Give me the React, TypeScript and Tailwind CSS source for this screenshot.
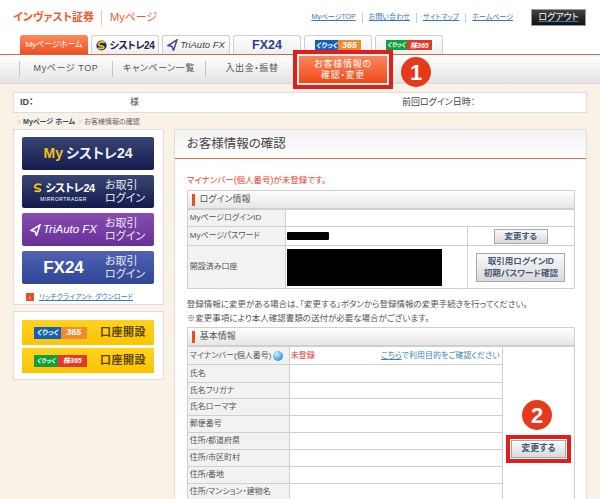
const jp = "font-['Liberation_Sans','Noto_Sans_CJK_JP',sans-serif] [font-feature-settings:'palt']";

function Tab({ className = "", children }: { className?: string; children: React.ReactNode }) {
  return (
    <div
      className={`flex h-[19px] w-[68px] items-center justify-center rounded-t-[3px] border border-b-0 border-[#cfcfcf] bg-gradient-to-b from-white to-[#efefef] ${className}`}
    >
      {children}
    </div>
  );
}

function ClickLogo({ kabu = false, wide = false }: { kabu?: boolean; wide?: boolean }) {
  const size = wide ? "h-[12px] w-[53px]" : "h-[10px] w-[46px]";
  if (kabu) {
    return (
      <div className={`flex shrink-0 items-center overflow-hidden whitespace-nowrap font-bold italic leading-none text-white ${size}`}>
        <span className="flex h-full w-[45%] items-center justify-center bg-[#12a03c] text-[6px]">くりっく</span>
        <span className="flex h-full flex-1 items-center justify-center bg-[#e03a2a] text-[7px]">株365</span>
      </div>
    );
  }
  return (
    <div className={`flex shrink-0 items-center overflow-hidden whitespace-nowrap font-bold italic leading-none text-white ${size}`}>
      <span className="flex h-full w-[50%] items-center justify-center bg-[#1460b8] text-[7px]">くりっく</span>
      <span className="flex h-full flex-1 items-center justify-center bg-[#f08a30] text-[9px]">365</span>
    </div>
  );
}

function SwirlS({ size = 14 }: { size?: number }) {
  return (
    <svg width={size} height={size} viewBox="0 0 14 14" className="shrink-0">
      <circle cx="7" cy="7" r="6.5" fill="#1e2a5c" />
      <path d="M11 3.5C8 1.5 3.5 2.5 3 5.5c-.4 2.5 6.5 1.5 7 3.5.3 1.8-4 2.5-7 1" fill="none" stroke="#f3c31c" strokeWidth="2.2" />
    </svg>
  );
}

function TriMark({ color = "#5b3d9e" }: { color?: string }) {
  return (
    <svg width="11" height="12" viewBox="0 0 11 12" className="shrink-0">
      <path d="M10 .8 1 6.5l4 .9L6.5 11.5Z" fill="none" stroke={color} strokeWidth="1.5" />
    </svg>
  );
}

function NavItem({ label, w }: { label: string; w: string }) {
  return (
    <div className={`flex h-[16px] items-center justify-center border-l border-[#c4c4c4] text-[9px] tracking-[0.6px] text-[#555] ${w}`}>
      {label}
    </div>
  );
}

function TradeButton({ bg, left }: { bg: string; left: React.ReactNode }) {
  return (
    <div className={`flex h-[33px] w-[132px] items-center rounded-[2px] ${bg}`}>
      <div className="flex w-[83px] flex-col items-center justify-center">{left}</div>
      <div className="flex flex-col text-[11px] leading-[13px] text-[#e8e8f0]">
        <span>お取引</span>
        <span>ログイン</span>
      </div>
    </div>
  );
}

function OpenAccount({ kabu = false }: { kabu?: boolean }) {
  return (
    <div className="flex h-[25px] w-[132px] items-center rounded-[1px] bg-gradient-to-b from-[#ffd21e] to-[#fcc400] pl-[12px]">
      <ClickLogo kabu={kabu} wide />
      <span className="ml-[13px] whitespace-nowrap text-[11px] font-bold tracking-[0.5px] text-[#5a4300]">口座開設</span>
    </div>
  );
}

function SectionHead({ title }: { title: string }) {
  return (
    <div className="flex h-[19px] items-center border border-[#cfcfcf] bg-gradient-to-b from-white to-[#e6e6e6] pl-[4px]">
      <span className="h-[12px] w-[3px] bg-[#f04c1c]" />
      <span className="ml-[5px] text-[9px] text-[#555]">{title}</span>
    </div>
  );
}

function GrayButton({ className = "", children }: { className?: string; children: React.ReactNode }) {
  return (
    <div
      className={`flex items-center justify-center border border-[#a9a9a9] bg-gradient-to-b from-[#fafafa] to-[#d9d9d9] text-[8.5px] font-bold text-[#3f5a74] ${className}`}
    >
      {children}
    </div>
  );
}

const th = "border border-[#cfcfcf] bg-[#f2f2f2] pl-[2px] text-left text-[8px] font-normal whitespace-nowrap text-[#555]";
const td = "border border-[#cfcfcf] bg-white";

const basicRows: [string, string][] = [
  ["氏名", "h-[18px]"],
  ["氏名フリガナ", "h-[16px]"],
  ["氏名ローマ字", "h-[17px]"],
  ["郵便番号", "h-[17px]"],
  ["住所/都道府県", "h-[17px]"],
  ["住所/市区町村", "h-[17px]"],
  ["住所/番地", "h-[17px]"],
  ["住所/マンション・建物名", "h-[17px]"],
];

export default function App() {
  return (
    <div className={`relative h-[499px] w-[600px] overflow-hidden bg-[#fbf2e7] ${jp}`}>
      {/* header */}
      <div className="bg-white">
        <div className="flex h-[35px] items-center pl-[13px] pr-[14px]">
          <span className="text-[11px] font-bold text-[#ee5a32]">インヴァスト証券</span>
          <span className="ml-[7px] h-[15px] w-px bg-[#e8c8b8]" />
          <span className="ml-[8px] text-[11px] text-[#ee5a32]">Myページ</span>
          <div className="ml-auto flex items-center text-[7px] text-[#3a78b8] underline">
            <span>MyページTOP</span>
            <span className="ml-[6px] h-[10px] w-px bg-[#ccc]" />
            <span className="ml-[6px]">お問い合わせ</span>
            <span className="ml-[6px] h-[10px] w-px bg-[#ccc]" />
            <span className="ml-[6px]">サイトマップ</span>
            <span className="ml-[6px] h-[10px] w-px bg-[#ccc]" />
            <span className="ml-[6px]">ホームページ</span>
            <div className="ml-[18px] flex h-[17px] w-[55px] items-center justify-center border border-[#999] bg-gradient-to-b from-[#444] to-[#111] text-[9px] text-white no-underline">
              ログアウト
            </div>
          </div>
        </div>
        <div className="flex h-[19px] items-end gap-[3px] pl-[20px]">
          <div className="flex h-[19px] w-[68px] items-center justify-center rounded-t-[3px] bg-gradient-to-b from-[#f98a5a] to-[#ee4d1c] text-[8px] text-white">
            Myページホーム
          </div>
          <Tab>
            <SwirlS size={11} />
            <span className="ml-[3px] text-[10px] font-bold tracking-[-0.5px] text-[#1a2350]">シストレ24</span>
          </Tab>
          <Tab>
            <TriMark />
            <span className="ml-[2px] whitespace-nowrap text-[9.5px] italic text-[#444]">TriAuto FX</span>
          </Tab>
          <Tab>
            <span className="text-[12.5px] font-bold text-[#28418f]">FX24</span>
          </Tab>
          <Tab>
            <ClickLogo />
          </Tab>
          <Tab>
            <ClickLogo kabu />
          </Tab>
        </div>
        <div className="h-px bg-[#e8603c]" />
      </div>

      {/* nav */}
      <div className="flex h-[29px] items-center border-b border-[#d8d8d8] bg-gradient-to-b from-white to-[#e3e3e3] pl-[19px]">
        <NavItem label="Myページ TOP" w="w-[93px]" />
        <NavItem label="キャンペーン一覧" w="w-[93px]" />
        <NavItem label="入出金・振替" w="w-[93px]" />
      </div>

      <div className="px-[13px] pt-[8px]">
        {/* id bar */}
        <div className="flex h-[21px] items-center border border-[#ddd] bg-white pl-[6px] text-[9px] text-[#444]">
          <span className="w-[110px] font-bold">ID：</span>
          <span className="w-[272px]">様</span>
          <span>前回ログイン日時：</span>
        </div>

        {/* breadcrumb */}
        <div className="flex h-[16px] items-center pl-[4px] pt-[2px] text-[7px] text-[#666]">
          <span className="text-[#ccc]">&gt;</span>
          <span className="ml-[2px] font-bold text-[#2c4a63]">Myページ ホーム</span>
          <span className="ml-[3px] text-[#ccc]">&gt;</span>
          <span className="ml-[2px]">お客様情報の確認</span>
        </div>

        <div className="flex items-start gap-[10px]">
          {/* sidebar */}
          <div className="flex w-[151px] flex-col gap-[6px]">
            <div className="flex h-[176px] flex-col gap-[5px] border border-[#ddd] bg-white pl-[8px] pt-[7px]">
              <div className="flex h-[33px] w-[132px] items-center justify-center rounded-[2px] bg-gradient-to-b from-[#3a4672] to-[#141b4d] text-[14px] font-bold">
                <span className="text-[#f0c020]">My</span>
                <span className="ml-[3px] text-[#eeeef4]">シストレ24</span>
              </div>
              <TradeButton
                bg="bg-gradient-to-b from-[#3a4672] to-[#141b4d]"
                left={
                  <>
                    <div className="flex items-center">
                      <SwirlS size={12} />
                      <span className="ml-[1px] text-[11px] font-bold tracking-[-0.5px] text-white">シストレ24</span>
                    </div>
                    <span className="text-[5px] leading-[7px] tracking-[0.5px] text-white">MIRRORTRADER</span>
                  </>
                }
              />
              <TradeButton
                bg="bg-gradient-to-b from-[#8a4cb0] to-[#67309a]"
                left={
                  <div className="flex items-center">
                    <TriMark color="#ffffff" />
                    <span className="ml-[2px] whitespace-nowrap text-[11.5px] italic text-white">TriAuto FX</span>
                  </div>
                }
              />
              <TradeButton
                bg="bg-gradient-to-b from-[#5062b0] to-[#2f4596]"
                left={<span className="text-[17px] font-bold text-white">FX24</span>}
              />
              <div className="flex items-center pl-[4px] pt-[3px]">
                <span className="flex h-[8px] w-[8px] items-center justify-center bg-[#e8502a] text-[6px] leading-none text-white">
                  ›
                </span>
                <span className="ml-[5px] whitespace-nowrap text-[7px] text-[#3a78b8] underline">リッチクライアント ダウンロード</span>
              </div>
            </div>
            <div className="flex h-[69px] flex-col gap-[3px] border border-[#ddd] bg-white pl-[8px] pt-[8px]">
              <OpenAccount />
              <OpenAccount kabu />
            </div>
          </div>

          {/* main */}
          <div className="w-[414px] border border-[#ddd] bg-white">
            <div className="flex h-[29px] items-center border-b-[1px] border-[#ee6a44] bg-gradient-to-b from-[#f1f1f1] to-white pl-[12px] text-[12.5px] text-[#444]">
              お客様情報の確認
            </div>
            <div className="pl-[12px] pr-[11px] pt-[15px]">
              <p className="h-[16px] text-[8.5px] leading-[12px] text-[#e8402a]">マイナンバー(個人番号)が未登録です。</p>

              <SectionHead title="ログイン情報" />
              <table className="w-full table-fixed border-collapse">
                <colgroup>
                  <col className="w-[98px]" />
                  <col className="w-[182px]" />
                  <col />
                </colgroup>
                <tbody>
                  <tr className="h-[17px]">
                    <th className={th}>MyページログインID</th>
                    <td className={td} colSpan={2} />
                  </tr>
                  <tr className="h-[19px]">
                    <th className={th}>Myページパスワード</th>
                    <td className={`${td} pl-[1px]`}>
                      <div className="h-[8px] w-[42px] rounded-[1px] bg-black" />
                    </td>
                    <td className={td}>
                      <GrayButton className="mx-auto h-[15px] w-[54px]">変更する</GrayButton>
                    </td>
                  </tr>
                  <tr className="h-[43px]">
                    <th className={th}>開設済み口座</th>
                    <td className={`${td} pl-[1px]`}>
                      <div className="h-[37px] w-[155px] bg-black" />
                    </td>
                    <td className={td}>
                      <GrayButton className="mx-auto h-[29px] w-[89px] text-center leading-[12px]">
                        取引用ログインID
                        <br />
                        初期パスワード確認
                      </GrayButton>
                    </td>
                  </tr>
                </tbody>
              </table>

              <div className="whitespace-nowrap pt-[8px] text-[8.5px] leading-[14px] text-[#555]">
                <p>登録情報に変更がある場合は、「変更する」ボタンから登録情報の変更手続きを行ってください。</p>
                <p>※変更事項により本人確認書類の送付が必要な場合がございます。</p>
              </div>

              <div className="mt-[2px]">
                <SectionHead title="基本情報" />
              </div>
              <table className="w-full table-fixed border-collapse">
                <colgroup>
                  <col className="w-[102px]" />
                  <col className="w-[213px]" />
                  <col />
                </colgroup>
                <tbody>
                  <tr className="h-[18px]">
                    <th className={th}>
                      <div className="flex items-center">
                        マイナンバー(個人番号)
                        <span className="ml-[2px] h-[10px] w-[10px] rounded-full bg-[radial-gradient(circle_at_35%_30%,#cfeefa,#3a9bd8_70%)]" />
                      </div>
                    </th>
                    <td className={td}>
                      <div className="flex items-center justify-between whitespace-nowrap pl-[1px] pr-[2px] text-[8px]">
                        <span className="text-[#e8302a]">未登録</span>
                        <span className="text-[#3a86b8]">
                          <span className="underline">こちら</span>で利用目的をご確認ください
                        </span>
                      </div>
                    </td>
                    <td className={td} rowSpan={9} />
                  </tr>
                  {basicRows.map(([label, h]) => (
                    <tr key={label} className={h}>
                      <th className={th}>{label}</th>
                      <td className={td} />
                    </tr>
                  ))}
                </tbody>
              </table>
            </div>
          </div>
        </div>
      </div>

      {/* callouts laid over the page */}
      <div className="absolute left-[293px] top-[50px] h-[39px] w-[100px] border-4 border-[#e01f1a] bg-[#efefef] p-[2px]">
        <div className="flex h-full w-full items-center justify-center bg-gradient-to-b from-[#f9855a] to-[#f0480f] text-center text-[9px] leading-[11px] tracking-[0.7px] text-white">
          お客様情報の
          <br />
          確認・変更
        </div>
      </div>
      <div className="absolute left-[401px] top-[57px] flex h-[30px] w-[30px] items-center justify-center rounded-full bg-[#e63a1c] text-[22px] font-bold text-white">
        1
      </div>
      <div className="absolute left-[522px] top-[400px] flex h-[30px] w-[30px] items-center justify-center rounded-full bg-[#e63a1c] text-[22px] font-bold text-white">
        2
      </div>
      <div className="absolute left-[506px] top-[435px] h-[28px] w-[65px] border-4 border-[#e01f1a] bg-white p-px">
        <GrayButton className="h-full w-full text-[9px]">変更する</GrayButton>
      </div>
    </div>
  );
}
